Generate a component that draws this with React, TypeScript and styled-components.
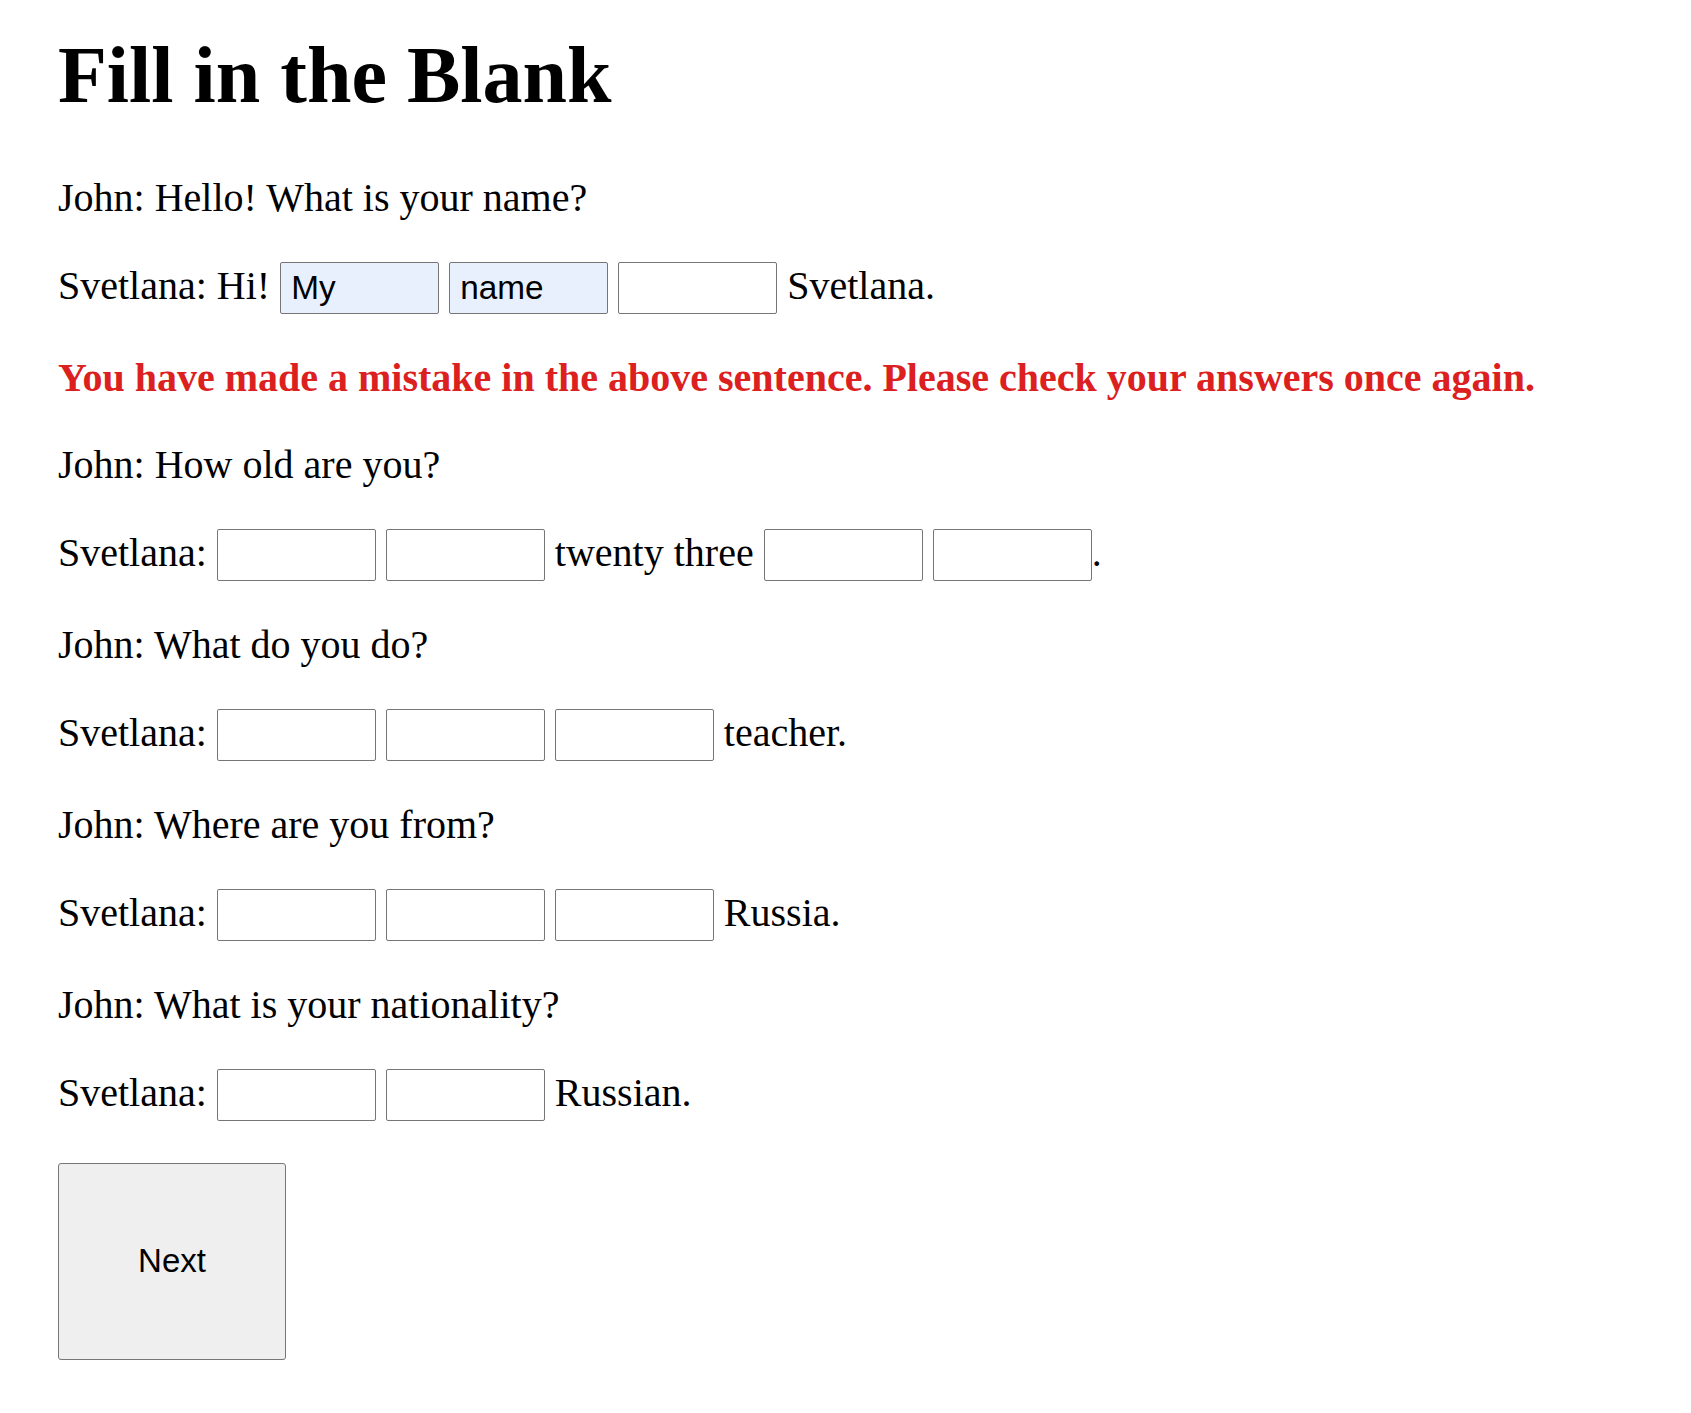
import styled, { createGlobalStyle } from 'styled-components';

const GlobalStyle = createGlobalStyle`
  body {
    margin: 0;
    background: #fff;
    color: #000;
    font-family: "Liberation Serif", "Times New Roman", serif;
  }
`;

const Page = styled.div`
  padding: 29px 58px 40px;
`;

const Heading = styled.h1`
  margin: 0 0 53.5px;
  font-size: 80px;
  line-height: 92px;
  font-weight: bold;
`;

const Line = styled.p`
  margin: 41px 0;
  font-size: 40px;
  line-height: 46px;
`;

const ErrorLine = styled(Line)`
  color: #dc2020;
  font-weight: bold;
`;

const Blank = styled.input<{ $filled?: boolean }>`
  box-sizing: border-box;
  width: 159px;
  height: 52px;
  padding: 0 10px;
  border: 1px solid #767676;
  border-radius: 2px;
  background: ${({ $filled }) => ($filled ? '#e8f0fe' : '#fff')};
  font-family: "Liberation Sans", Arial, sans-serif;
  font-size: 33.33px;
  color: #000;
  vertical-align: baseline;
  outline: none;
`;

const NextButton = styled.button`
  display: block;
  box-sizing: border-box;
  width: 228px;
  height: 197px;
  margin-top: 42px;
  background: #efefef;
  border: 1px solid #767676;
  border-radius: 3px;
  font-family: "Liberation Sans", Arial, sans-serif;
  font-size: 33px;
  color: #000;
  cursor: pointer;
`;

type Part = string | { value?: string };

const dialogue: { question: string; answer: Part[]; error?: string }[] = [
  {
    question: 'John: Hello! What is your name?',
    answer: ['Svetlana: Hi! ', { value: 'My' }, ' ', { value: 'name' }, ' ', {}, ' Svetlana.'],
    error: 'You have made a mistake in the above sentence. Please check your answers once again.',
  },
  {
    question: 'John: How old are you?',
    answer: ['Svetlana: ', {}, ' ', {}, ' twenty three ', {}, ' ', {}, '.'],
  },
  {
    question: 'John: What do you do?',
    answer: ['Svetlana: ', {}, ' ', {}, ' ', {}, ' teacher.'],
  },
  {
    question: 'John: Where are you from?',
    answer: ['Svetlana: ', {}, ' ', {}, ' ', {}, ' Russia.'],
  },
  {
    question: 'John: What is your nationality?',
    answer: ['Svetlana: ', {}, ' ', {}, ' Russian.'],
  },
];

export default function App() {
  return (
    <Page>
      <GlobalStyle />
      <Heading>Fill in the Blank</Heading>
      {dialogue.map((item, index) => (
        <div key={index}>
          <Line>{item.question}</Line>
          <Line>
            {item.answer.map((part, i) => (typeof part === 'string' ? (
              <span key={i}>{part}</span>
            ) : (
              <Blank key={i} type="text" defaultValue={part.value} $filled={!!part.value} />
            )))}
          </Line>
          {item.error && <ErrorLine>{item.error}</ErrorLine>}
        </div>
      ))}
      <NextButton>Next</NextButton>
    </Page>
  );
}
